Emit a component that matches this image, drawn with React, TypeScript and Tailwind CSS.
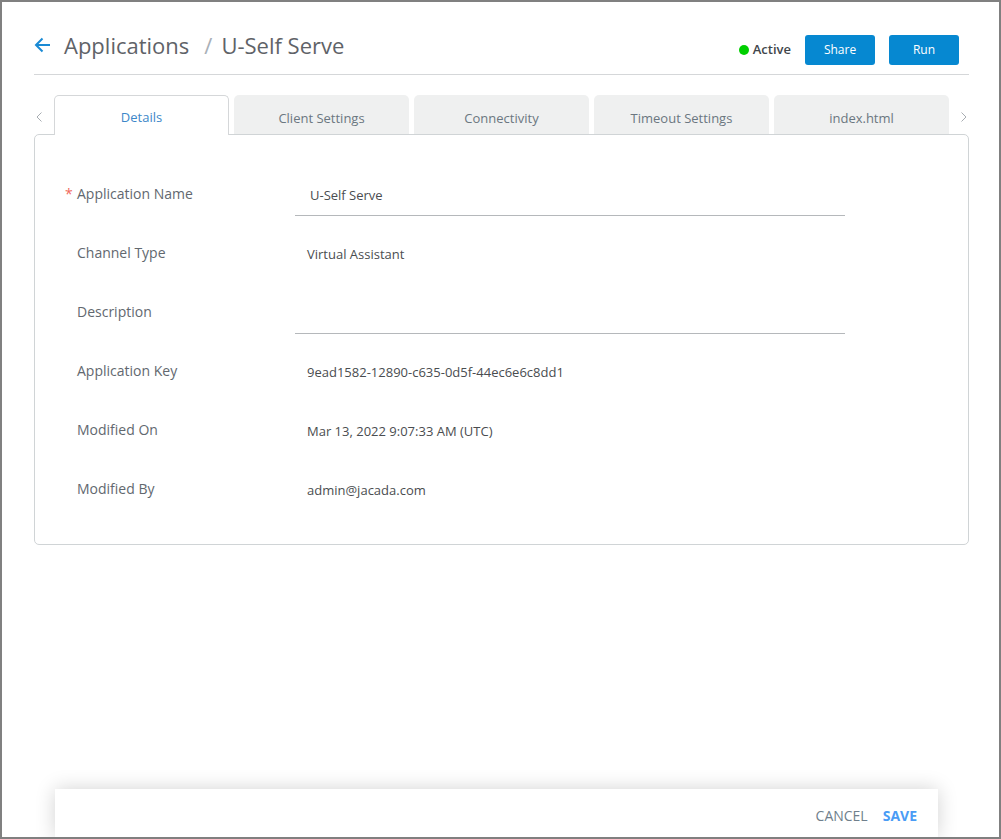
import React from "react";

const font = "font-['Open_Sans','Noto_Sans',sans-serif]";

function Row({ label, required, children }: { label: string; required?: boolean; children?: React.ReactNode }) {
  return (
    <div className="flex h-[59px]">
      <div className="relative w-[260px] pl-[30px] pt-[20px] text-[14px] leading-[20px] text-[#62686f]">
        {required && <span className="absolute left-[30px] top-[20px] text-[#f0685c]">*</span>}
        <span className="ml-[12px]">{label}</span>
      </div>
      <div className="flex-1">{children}</div>
    </div>
  );
}

function Value({ children }: { children: React.ReactNode }) {
  return <div className="pl-[12px] pt-[22px] text-[13px] leading-[18px] text-[#4a4d50]">{children}</div>;
}

export default function App() {
  const tabs = ["Client Settings", "Connectivity", "Timeout Settings", "index.html"];
  return (
    <div className={`${font} relative box-border h-[839px] w-[1001px] overflow-hidden border-2 border-[#808080] bg-white`}>
      <div className="ml-[32px] mr-[30px] flex h-[73px] items-end justify-between border-b border-[#d5d7d9] pb-[9px]">
        <div className="mb-[5px] flex h-[30px] items-center">
          <svg width="16" height="16" viewBox="0 0 16 16" fill="none" stroke="#1a8ad4" strokeWidth="2" className="mr-[14px]">
            <path d="M16 8H2M8.5 1.5 2 8l6.5 6.5" />
          </svg>
          <span className="text-[22px] text-[#5f6368]">Applications</span>
          <span className="ml-[15px] text-[22px] text-[#a9b0b8]">/</span>
          <span className="ml-[9px] text-[22px] text-[#5f6368]">U-Self Serve</span>
        </div>
        <div className="flex items-center pr-[10px]">
          <span className="h-[10px] w-[10px] rounded-full bg-[#00cf00]" />
          <span className="mb-[1px] ml-[4px] text-[13px] font-semibold text-[#41464b]">Active</span>
          <button className="ml-[14px] h-[30px] w-[70px] rounded-[3px] bg-[#0688d1] text-[12px] font-medium text-white">Share</button>
          <button className="ml-[14px] h-[30px] w-[70px] rounded-[3px] bg-[#0688d1] text-[12px] font-medium text-white">Run</button>
        </div>
      </div>

      <div className="relative z-10 ml-[20px] mt-[20px] flex h-[39px] items-start">
        <span className="w-[32px] shrink-0 pl-[14px] pt-[17px]">
          <svg width="6" height="10" viewBox="0 0 6 10" fill="none" stroke="#a8adb2" strokeWidth="1" className="block"><path d="M5.5 0.5 1 5l4.5 4.5" /></svg>
        </span>
        <div className="flex h-[40px] w-[175px] shrink-0 items-center justify-center rounded-t-[5px] border border-b-0 border-[#d5d7d9] bg-white pt-[4px] text-[13px] text-[#3d87c9]">Details</div>
        {tabs.map((t) => (
          <div key={t} className="ml-[5px] flex h-[39px] w-[175px] shrink-0 items-center justify-center rounded-t-[5px] bg-[#eff0f0] pt-[8px] text-[13px] text-[#6b7780]">{t}</div>
        ))}
        <span className="pl-[12px] pt-[17px]">
          <svg width="6" height="10" viewBox="0 0 6 10" fill="none" stroke="#a8adb2" strokeWidth="1" className="block"><path d="M0.5 0.5 5 5l-4.5 4.5" /></svg>
        </span>
      </div>

      <div className="ml-[32px] h-[411px] w-[935px] rounded-[5px] border border-[#d0d4d6] pt-[29px]">
        <Row label="Application Name" required>
          <div className="h-[52px] w-[550px] border-b border-[#b5b8bb] pl-[15px] pt-[22px] text-[13px] leading-[18px] text-[#4a4d50]">U-Self Serve</div>
        </Row>
        <Row label="Channel Type"><Value>Virtual Assistant</Value></Row>
        <Row label="Description"><div className="h-[52px] w-[550px] border-b border-[#b5b8bb]" /></Row>
        <Row label="Application Key"><Value>9ead1582-12890-c635-0d5f-44ec6e6c8dd1</Value></Row>
        <Row label="Modified On"><Value>Mar 13, 2022 9:07:33 AM (UTC)</Value></Row>
        <Row label="Modified By"><Value>admin@jacada.com</Value></Row>
      </div>

      <div className="absolute bottom-0 left-[53px] flex h-[48px] w-[883px] items-center justify-end bg-white pr-[21px] pt-[5px] shadow-[0_0_20px_rgba(0,0,0,0.18)]">
        <span className="text-[14px] text-[#6f7f8c]">CANCEL</span>
        <span className="ml-[15px] text-[14px] font-bold text-[#4a9cf5]">SAVE</span>
      </div>
    </div>
  );
}
